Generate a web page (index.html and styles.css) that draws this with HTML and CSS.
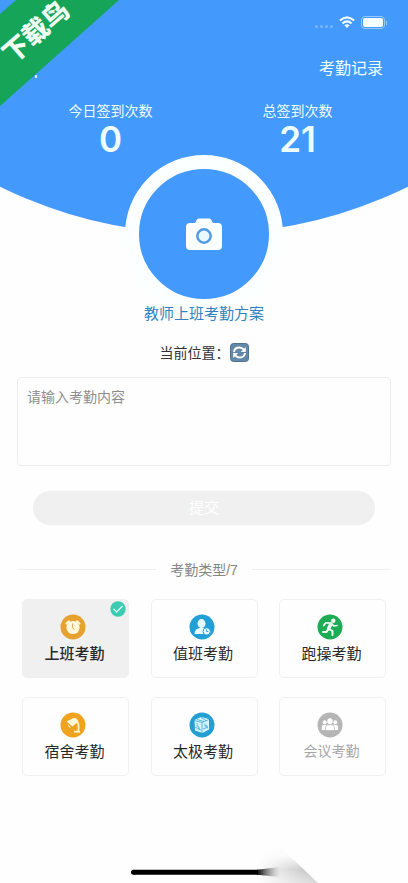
FILE: index.html
```html
<!DOCTYPE html>
<html lang="zh-CN">
<head>
<meta charset="utf-8">
<title>考勤</title>
<link rel="stylesheet" href="styles.css">
</head>
<body>
<main class="screen">
  <header class="hero">
    <div class="status">
      <span class="signal"><i></i><i></i><i></i><i></i></span>
      <svg class="wifi" width="16" height="12" viewBox="0 0 16 12"><g fill="none" stroke="#f2ffff" stroke-width="2.1"><path d="M.9 4.6Q8-2 15.100 4.600"/><path d="M3.500 7.400Q8 3.200 12.500 7.400"/></g><path d="M5.400 9.300Q8 7 10.600 9.300L8 12Z" fill="#f2ffff"/></svg>
      <span class="battery"><i></i></span>
    </div>
    <nav class="nav"><span class="back"></span><span>考勤记录</span></nav>
    <div class="stats">
      <div class="stat"><span>今日签到次数</span><strong>0</strong></div>
      <div class="stat"><span>总签到次数</span><strong>21</strong></div>
    </div>
    <div class="ribbon"><span>下载鸟</span></div>
  </header>
  <div class="camera">
    <svg width="38" height="33" viewBox="0 0 38 33"><path fill="#fbffff" d="M5 5h5l2-3.500Q12.800.500 14 .500h10q1.200 0 2 1L28 5h5q4 0 4 4v19q0 4-4 4H5q-4 0-4-4V9q0-4 4-4Z"/><circle cx="19" cy="18" r="6.700" fill="#e9f7ff" stroke="#559be3" stroke-width="2.500"/></svg>
  </div>
  <p class="plan">教师上班考勤方案</p>
  <div class="location"><span>当前位置：</span>
    <svg width="19" height="19" viewBox="0 0 19 19"><rect x=".5" y=".5" width="18" height="18" rx="3" fill="#6389a8" stroke="#4e7290"/><g fill="none" stroke="#fff" stroke-width="2"><path d="M4 9Q4.500 4.500 9.500 4.500Q12 4.500 14 6.800"/><path d="M15 10Q14.500 14.500 9.500 14.500Q7 14.500 5 12.200"/></g><path fill="#fff" d="M15.800 4v5h-5ZM3.200 15v-5h5Z"/></svg>
  </div>
  <div class="field">请输入考勤内容</div>
  <div class="submit">提交</div>
  <div class="divider"><span>考勤类型/7</span></div>
  <section class="grid">
    <article class="card selected">
      <svg class="icon" viewBox="0 0 26 26"><circle cx="13" cy="13" r="12.500" fill="#e6a12e"/><circle cx="13" cy="13.500" r="6.600" fill="#fff8dc"/><path d="M6.500 9.500L9 7.200M19.500 9.500L17 7.200" stroke="#fff8dc" stroke-width="2" stroke-linecap="round"/><path d="M12.600 9.500v4.300l2 2" fill="none" stroke="#d5aa62"/></svg>
      <span>上班考勤</span>
      <svg class="check" viewBox="0 0 16 16"><circle cx="8" cy="8" r="7.700" fill="#3dcbb1"/><path d="M3.600 8l3 3 6-6" fill="none" stroke="#e5fff9" stroke-width="1.200"/></svg>
    </article>
    <article class="card">
      <svg class="icon" viewBox="0 0 26 26"><circle cx="13" cy="13" r="12.500" fill="#239fd8"/><g fill="#e6faff"><ellipse cx="12.500" cy="9.600" rx="4" ry="4.500"/><path d="M5.500 20q0-5 5-6h4q2 0 3 1-4 1-2.500 5Z"/><circle cx="17.700" cy="17.400" r="3.700" stroke="#239fd8"/></g><path d="M17.500 15.300v2.200h1.800" fill="none" stroke="#239fd8" stroke-width=".9"/></svg>
      <span>值班考勤</span>
    </article>
    <article class="card">
      <svg class="icon" viewBox="0 0 26 26"><circle cx="13" cy="13" r="12.500" fill="#1dab55"/><circle cx="16.300" cy="6.700" r="2.200" fill="#f0fff3"/><g fill="none" stroke="#f0fff3" stroke-linecap="round" stroke-linejoin="round"><path d="M13.800 10l-2.300 5" stroke-width="3.500"/><path d="M13 9L8.700 8.800l-2 2.800M14.500 9.500l2.300 2.500 3.200-.500" stroke-width="1.700"/><path d="M12 15l3.500 2v4M11 15.500l-1.500 2.500H6" stroke-width="2"/></g></svg>
      <span>跑操考勤</span>
    </article>
    <article class="card">
      <svg class="icon" viewBox="0 0 26 26"><circle cx="13" cy="13" r="12.500" fill="#efa31f"/><path fill="#fff6d8" d="M6.500 9.500l7-3.500q3-.5 4.200 2l.3 2-5.500 4.500ZM8 12.500l3 3q-3 .5-3-3Z"/><path d="M16.500 9q3 2 1.800 10" fill="none" stroke="#fff6d8" stroke-width="1.800"/><path d="M14 19.700h6" stroke="#fff6d8" stroke-width="1.800"/></svg>
      <span>宿舍考勤</span>
    </article>
    <article class="card">
      <svg class="icon" viewBox="0 0 26 26"><circle cx="13" cy="13" r="12.500" fill="#259fd3"/><path fill="#d7f5ff" d="M5.500 8L12 5l8 2v10.500L13.500 21 6 18.500Z"/><g fill="none" stroke="#259fd3" stroke-width=".7"><path d="M5.500 8.500l7.500 2 7-3M13 10.500V21M8 7.500l7 2M12 5.500l5 3M8 11v3l2 1v3M16 11.500v3l2-1v3M6 15l6 3M14 17l5-2"/></g></svg>
      <span>太极考勤</span>
    </article>
    <article class="card disabled">
      <svg class="icon" viewBox="0 0 26 26"><circle cx="13" cy="13" r="12.500" fill="#b5b5b5"/><g fill="#fff"><circle cx="7.700" cy="10.300" r="2"/><circle cx="18.300" cy="10.300" r="2"/><path d="M4.800 18v-3q0-2.300 2.500-2.300h11.400q2.500 0 2.500 2.300v3Z"/><ellipse cx="13" cy="9.300" rx="2.700" ry="3" /><path stroke="#b5b5b5" stroke-width=".7" d="M8.500 18.500V16q0-3.300 3.500-3.300h2q3.500 0 3.500 3.300v2.500Z"/></g></svg>
      <span>会议考勤</span>
    </article>
  </section>
  <footer class="bottom">
    <svg width="408" height="63" viewBox="0 0 408 63"><defs>
      <linearGradient id="edge" x1="0" y1="0" x2="0" y2="1"><stop offset="0" stop-color="#888" stop-opacity="0"/><stop offset=".3" stop-color="#888" stop-opacity=".06"/><stop offset=".65" stop-color="#777" stop-opacity=".5"/><stop offset="1" stop-color="#999" stop-opacity=".35"/></linearGradient>
      <linearGradient id="side"><stop offset="0" stop-color="#fefefe"/><stop offset="1" stop-color="#fefefe" stop-opacity="0"/></linearGradient>
      <linearGradient id="tail"><stop offset="0" stop-color="#000"/><stop offset="1" stop-color="#777" stop-opacity="0"/></linearGradient></defs>
      <path d="M257 24h20l41 39h-61Z" fill="url(#edge)"/><path d="M257 24h20l41 39h-61Z" fill="url(#side)"/>
      <path d="M257 49.700L280 47v10l-23-2.300Z" fill="url(#tail)"/><path d="M133.500 52.200H258" stroke="#000" stroke-width="5" /><circle cx="133.500" cy="52.200" r="2.500"/></svg>
  </footer>
</main>
</body>
</html>
```
FILE: styles.css
```css
* { box-sizing: border-box; }
body { margin: 0; background: #fff; font-family: "Liberation Sans", "Noto Sans CJK SC", sans-serif; }
.screen { width: 408px; height: 883px; display: flex; flex-direction: column; align-items: center; overflow: hidden; background: #fefefe; color: #333; }
svg { display: block; flex: none; }
.hero { position: relative; width: 100%; height: 155px; flex: none; color: #edffff; }
.hero::before { content: ""; position: absolute; left: 0; top: 0; width: 408px; height: 236px; background: #4499fd; clip-path: circle(465px at 204px -231px); }
.status, .nav, .stats { position: relative; display: flex; }
.status { height: 46px; padding: 15px 23px 0 0; justify-content: flex-end; align-items: flex-start; }
.signal { display: flex; gap: 2px; margin: 9.500px 6px 0 0; }
.signal i { width: 3px; height: 3px; border-radius: 50%; background: #78b6fd; }
.wifi { margin: 1px 6px 0 0; }
.battery { position: relative; width: 24px; height: 13px; padding: 1px; border: 1px solid #95c9ff; border-radius: 4px; margin-top: 1px; }
.battery i { display: block; height: 100%; border-radius: 2px; background: #f5ffff; }
.battery::after { content: ""; position: absolute; right: -3px; top: 4px; width: 1px; height: 4px; background: #95c9ff; }
.nav { height: 54px; padding: 11px 25px 0 35px; justify-content: space-between; font-size: 16px; line-height: 24px; }
.back { width: 2px; height: 3px; margin-top: 18px; border-radius: 1px; background: #eefff5; }
.stats { padding: 0 17px; }
.stat { width: 50%; display: flex; flex-direction: column; align-items: center; font-size: 14px; line-height: 22px; }
.stat strong { font: 600 35px/34px Inter, sans-serif; }
.ribbon { position: absolute; left: 0; top: 0; width: 120px; height: 108px; }
.ribbon::before { content: ""; position: absolute; inset: 0; background: #15a458; clip-path: polygon(16px 0, 119px 0, 0 106px, 0 14px); }
.ribbon span { position: absolute; left: -3px; top: 21px; width: 78px; text-align: center; font-size: 26px; line-height: 22px; font-weight: 900; color: #f0fff4; transform: rotate(-41deg); white-space: nowrap; }
.camera { position: relative; width: 158px; height: 158px; flex: none; border: 14px solid #fbffff; border-radius: 50%; background: #4499fd; display: flex; align-items: center; justify-content: center; margin-bottom: -12px; }
.plan { margin: 0; position: relative; font-size: 15px; line-height: 26px; color: #2e82bd; }
.location { display: flex; align-items: center; height: 26px; margin-top: 12px; font-size: 14px; }
.field { width: 374px; height: 89px; flex: none; margin-top: 12px; padding: 9px; border: 1px solid #eee; border-radius: 4px; font-size: 14px; line-height: 21px; color: #8e8e8e; }
.submit { width: 342px; height: 34px; flex: none; margin-top: 25px; border-radius: 17px; background: #f0f0f0; color: #fff; text-align: center; font-size: 15px; line-height: 34px; }
.divider { display: flex; align-items: center; width: 374px; height: 24px; flex: none; margin-top: 32px; gap: 14px; font-size: 14px; color: #858585; }
.divider::before, .divider::after { content: ""; flex: 1; height: 1px; background: #eee; }
.grid { display: grid; grid-template-columns: repeat(3, 107px); gap: 19px 21.500px; margin-top: 18px; flex: none; }
.card { position: relative; height: 79px; display: flex; flex-direction: column; align-items: center; padding: 14px 2px 0 0; border: 1px solid #f0f0f0; border-radius: 5px; font-size: 15px; line-height: 25px; color: #282828; }
.card > span { margin-top: 1px; }
.icon { width: 26px; height: 26px; margin-right: 3px; }
.selected { background: #f0f0f0; font-weight: 500; }
.check { position: absolute; right: 2px; top: 1px; width: 16px; height: 16px; }
.disabled { color: #a6a6a6; font-size: 14px; }
.bottom { margin-top: auto; width: 408px; height: 63px; flex: none; }
```
